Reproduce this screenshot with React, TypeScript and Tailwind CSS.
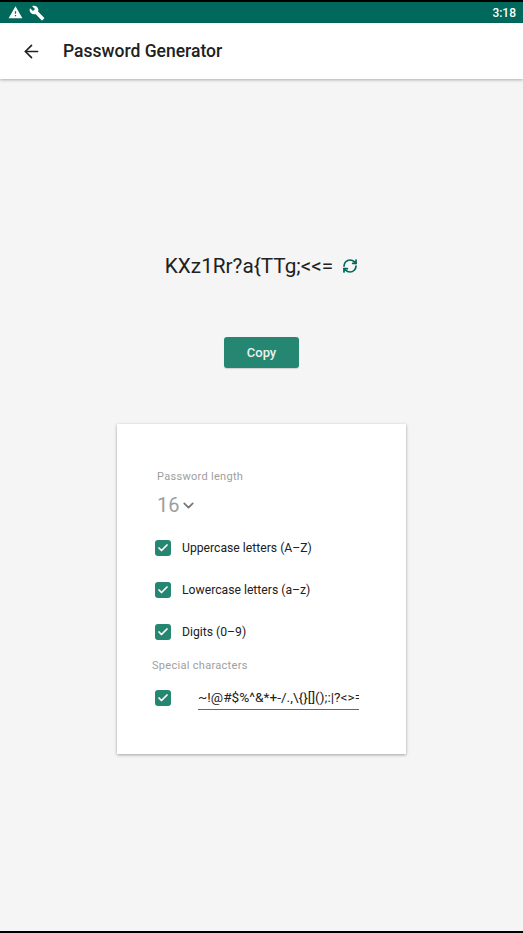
import { ArrowLeft, Check, ChevronDown, RefreshCw } from "lucide-react";

const OPTIONS = ["Uppercase letters (A–Z)", "Lowercase letters (a–z)", "Digits (0–9)"];

function Box() {
  return (
    <span className="flex size-4 shrink-0 items-center justify-center rounded-[3px] bg-[#258771]">
      <Check className="size-3 text-white" strokeWidth={3.5} />
    </span>
  );
}

export default function App() {
  return (
    <div className="flex h-[933px] w-[523px] flex-col overflow-hidden bg-[#f5f5f5] font-['Roboto',sans-serif]">
      <div className="h-[2px] bg-black" />
      {/* Status bar */}
      <div className="flex h-[21px] items-center justify-between bg-[#00695c] pl-[8px] pr-[7px] text-white">
        <div className="flex items-center gap-[6px]">
          <svg viewBox="0 0 24 24" className="size-[15px]" fill="currentColor">
            <path d="M1 21h22L12 2 1 21zm12-3h-2v-2h2v2zm0-4h-2v-4h2v4z" />
          </svg>
          <svg viewBox="0 0 24 24" className="size-[16px]" fill="currentColor">
            <path d="M22.7 19l-9.1-9.1c.9-2.3.4-5-1.5-6.9-2-2-5-2.400-7.400-1.300L9 6 6 9 1.600 4.700C.4 7.100.9 10.100 2.900 12.100c1.900 1.900 4.600 2.400 6.900 1.500l9.100 9.100c.4.400 1 .4 1.400 0l2.300-2.300c.5-.4.5-1.100.1-1.400z" />
          </svg>
        </div>
        <span className="text-[12px] font-medium">3:18</span>
      </div>

      {/* App bar */}
      <header className="z-10 flex h-[56px] shrink-0 items-center bg-white pl-[21px] shadow-[0_1px_3px_rgba(0,0,0,0.3)]">
        <ArrowLeft className="size-[21px] text-[#212121]" strokeWidth={1.9} />
        <h1 className="ml-[21px] text-[17.500px] font-medium text-[#212121]">Password Generator</h1>
      </header>

      <main className="flex flex-col items-center">
        <div className="mt-[173px] flex h-[28px] items-center gap-[9px]">
          <span className="text-[20.750px] leading-[28px] text-[#212121]">{"KXz1Rr?a{TTg;<<="}</span>
          <RefreshCw className="size-[16px] text-[#00695c]" strokeWidth={2.6} />
        </div>

        <button className="mt-[57px] h-[31px] w-[75px] rounded-[3px] bg-[#258771] text-[13px] font-medium text-white/90 shadow-[0_1px_1px_rgba(0,0,0,0.15)]">
          Copy
        </button>

        {/* Options card */}
        <section className="mt-[56px] flex h-[330px] w-[289px] flex-col bg-white pl-[35px] pt-[46px] shadow-[0_1px_3px_rgba(0,0,0,0.35)]">
          <label className="pl-[5px] text-[11px] leading-[13px] tracking-[0.3px] text-[#9e9e9e]">Password length</label>
          <div className="mt-[10px] flex h-[24px] items-center gap-[1px] pl-[5px] text-[#9e9e9e]">
            <span className="text-[20px]">16</span>
            <ChevronDown className="size-[17px] text-[#757575]" strokeWidth={2.4} />
          </div>

          <div className="mt-[23px] flex flex-col gap-[26px]">
            {OPTIONS.map((option) => (
              <div key={option} className="flex h-[16px] items-center gap-[11px] pl-[3px]">
                <Box />
                <span className="text-[12.200px] text-[#212121]">{option}</span>
              </div>
            ))}
          </div>

          <label className="mt-[19px] text-[11px] leading-[13px] tracking-[0.3px] text-[#9e9e9e]">Special characters</label>
          <div className="mt-[13px] flex items-center pl-[3px]">
            <Box />
            <div className="ml-[27px] h-[25px] w-[161px] overflow-hidden whitespace-nowrap border-b border-[#258771] text-[13.700px] leading-[24px] text-[#212121]">
              {"~!@#$%^&*+-/.,\\{}[]();:|?<>="}
            </div>
          </div>
        </section>
      </main>

      <div className="mt-auto h-[2px] bg-black" />
    </div>
  );
}
